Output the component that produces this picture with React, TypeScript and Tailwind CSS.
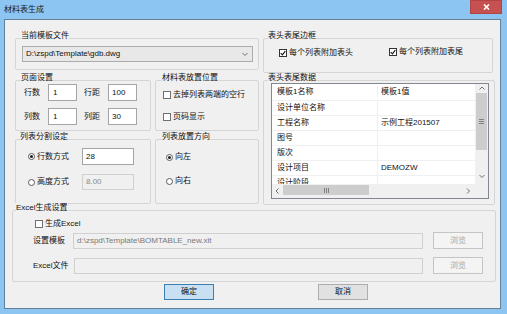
import clsx from "clsx";

const rows: [string, string][] = [
  ["设计单位名称", ""],
  ["工程名称", "示例工程201507"],
  ["图号", ""],
  ["版次", ""],
  ["设计项目", "DEMOZW"],
  ["设计阶段", ""],
];

function Group({
  label,
  labelPos,
  className,
  children,
}: {
  label: string;
  labelPos: string;
  className?: string;
  children?: React.ReactNode;
}) {
  return (
    <div className={clsx("relative rounded-[2px] border border-[#d5d5d5]", className)}>
      <span className={clsx("absolute -top-[8px] bg-[#f0f0f0] leading-[10px] whitespace-nowrap", labelPos)}>
        {label}
      </span>
      {children}
    </div>
  );
}

function Check({ label, checked }: { label: string; checked?: boolean }) {
  return (
    <div className="flex h-[10px] items-center whitespace-nowrap">
      <span
        className={clsx(
          "flex h-[8px] w-[8px] shrink-0 items-center justify-center border bg-white",
          checked ? "border-[#333333]" : "border-[#707070]"
        )}
      >
        {checked && (
          <svg width="6" height="6" viewBox="0 0 6 6">
            <path d="M0.7 3.1 L2.4 4.8 L5.3 1.1" fill="none" stroke="#1e1e1e" strokeWidth="1.2" />
          </svg>
        )}
      </span>
      <span className="ml-[2px] leading-[10px]">{label}</span>
    </div>
  );
}

function Radio({ label, on }: { label: string; on?: boolean }) {
  return (
    <div className="flex h-[10px] items-center whitespace-nowrap">
      <span className="flex h-[7px] w-[7px] shrink-0 items-center justify-center rounded-full border border-[#5a5a5a] bg-white">
        {on && <span className="h-[3px] w-[3px] rounded-full bg-[#1e1e1e]" />}
      </span>
      <span className="ml-[2px] leading-[10px]">{label}</span>
    </div>
  );
}

function Chevron({ dir }: { dir: "up" | "down" | "left" | "right" }) {
  const d = {
    up: "M0.5 3.5 L3 1 L5.5 3.5",
    down: "M0.5 1 L3 3.5 L5.5 1",
    left: "M3.5 0.5 L1 3 L3.5 5.5",
    right: "M1 0.5 L3.5 3 L1 5.5",
  }[dir];
  const horiz = dir === "left" || dir === "right";
  return (
    <svg width={horiz ? 5 : 6} height={horiz ? 6 : 5} viewBox={horiz ? "0 0 5 6" : "0 0 6 5"}>
      <path d={d} fill="none" stroke="#707070" strokeWidth="1" />
    </svg>
  );
}

export default function App() {
  return (
    <div className="flex h-[314px] w-[507px] flex-col overflow-hidden bg-[#8cc5f1] font-['Liberation_Sans','Noto_Sans_CJK_SC',sans-serif] text-[8px] leading-[10px] text-[#111]">
      {/* title bar */}
      <div className="flex h-[19px] shrink-0 items-start justify-between">
        <span className="ml-[4px] mt-[5px] leading-[10px] text-[#1a1a1a]">材料表生成</span>
        <div className="mr-[5px] flex h-[14px] w-[32px] items-center justify-center border border-[#b04545] bg-[#c75050]">
          <svg width="7" height="6" viewBox="0 0 7 6">
            <path d="M1 0.5 L6 5.5 M6 0.5 L1 5.5" stroke="white" strokeWidth="1.6" />
          </svg>
        </div>
      </div>

      {/* dialog body */}
      <div className="ml-[4px] h-[290px] w-[497px] shrink-0 border border-[#62809a] bg-[#f0f0f0]">
        <div className="ml-[10px] mt-[18px] flex">
          {/* left column */}
          <div className="flex w-[244px] flex-col">
            <Group label="当前模板文件" labelPos="left-[5px]" className="h-[32px] w-full">
              <div className="pl-[6px] pt-[7px]">
                <div className="flex h-[16px] w-[231px] items-center justify-between border border-[#acacac] bg-[#e8e8e8] pl-[3px] pr-[4px]">
                  <span>{"D:\\zspd\\Template\\gdb.dwg"}</span>
                  <Chevron dir="down" />
                </div>
              </div>
            </Group>

            <div className="mt-[10px] flex gap-[4px]">
              <Group label="页面设置" labelPos="left-[5px]" className="h-[51px] w-[136px]">
                <div className="flex flex-col pl-[8px] pt-[3px]">
                  <div className="flex h-[17px] items-center">
                    <span className="w-[24px]">行数</span>
                    <div className="flex h-[17px] w-[29px] items-center border border-[#a5a5a5] bg-white pl-[4px]">1</div>
                    <span className="ml-[7px] w-[24px]">行距</span>
                    <div className="flex h-[17px] w-[29px] items-center border border-[#a5a5a5] bg-white pl-[3px]">100</div>
                  </div>
                  <div className="mt-[7px] flex h-[17px] items-center">
                    <span className="w-[24px]">列数</span>
                    <div className="flex h-[17px] w-[29px] items-center border border-[#a5a5a5] bg-white pl-[4px]">1</div>
                    <span className="ml-[7px] w-[24px]">列距</span>
                    <div className="flex h-[17px] w-[29px] items-center border border-[#a5a5a5] bg-white pl-[3px]">30</div>
                  </div>
                </div>
              </Group>
              <Group label="材料表放置位置" labelPos="left-[6px]" className="h-[51px] w-[104px]">
                <div className="flex flex-col pl-[7px] pt-[9px]">
                  <Check label="去掉列表两端的空行" />
                  <div className="mt-[12px]">
                    <Check label="页码显示" />
                  </div>
                </div>
              </Group>
            </div>

            <div className="mt-[8px] flex gap-[4px]">
              <Group label="列表分割设定" labelPos="left-[4px]" className="h-[65px] w-[136px]">
                <div className="flex flex-col pl-[12px] pt-[8px]">
                  <div className="flex h-[17px] items-center">
                    <div className="w-[54px]">
                      <Radio label="行数方式" on />
                    </div>
                    <div className="flex h-[17px] w-[52px] items-center border border-[#a5a5a5] bg-white pl-[3px]">28</div>
                  </div>
                  <div className="mt-[9px] flex h-[16px] items-center">
                    <div className="w-[54px]">
                      <Radio label="高度方式" />
                    </div>
                    <div className="flex h-[16px] w-[52px] items-center border border-[#d0d0d0] bg-[#f0f0f0] pl-[3px] text-[#8a8a8a]">
                      8.00
                    </div>
                  </div>
                </div>
              </Group>
              <Group label="列表放置方向" labelPos="left-[6px]" className="h-[65px] w-[104px]">
                <div className="flex flex-col pl-[10px] pt-[12px]">
                  <Radio label="向左" on />
                  <div className="mt-[14px]">
                    <Radio label="向右" />
                  </div>
                </div>
              </Group>
            </div>
          </div>

          {/* right column */}
          <div className="ml-[4px] flex w-[232px] flex-col">
            <Group label="表头表尾边框" labelPos="left-[4px]" className="h-[35px] w-[230px]">
              <div className="flex pl-[15px] pt-[9px]">
                <div className="w-[110px]">
                  <Check label="每个列表附加表头" checked />
                </div>
                <div className="-mt-[1px]">
                  <Check label="每个列表附加表尾" checked />
                </div>
              </div>
            </Group>

            <Group label="表头表尾数据" labelPos="left-[4px]" className="mt-[7px] h-[125px] w-[232px]">
              <div className="pl-[7px] pt-[2px]">
                <div className="flex h-[116px] w-[218px] flex-col border border-[#828790] bg-white">
                  <div className="flex h-[100px]">
                    <div className="w-[203px] overflow-hidden">
                      <div className="flex h-[17px] items-center border-b border-[#f0f0f0]">
                        <span className="w-[106px] border-r border-[#f0f0f0] pl-[5px]">模板1名称</span>
                        <span className="pl-[3px]">模板1值</span>
                      </div>
                      {rows.map(([k, v]) => (
                        <div key={k} className="flex h-[15px] items-center border-b border-[#f0f0f0]">
                          <span className="flex h-[15px] w-[106px] items-center border-r border-[#f0f0f0] pl-[5px]">{k}</span>
                          <span className="pl-[3px]">{v}</span>
                        </div>
                      ))}
                    </div>
                    <div className="flex w-[13px] flex-col bg-[#f0f0f0]">
                      <div className="flex h-[9px] items-center justify-center">
                        <Chevron dir="up" />
                      </div>
                      <div className="mx-auto flex h-[57px] w-[11px] items-center justify-center bg-[#cdcdcd]">
                        <svg width="5" height="5" viewBox="0 0 5 5">
                          <path d="M0 0.5 H5 M0 2.5 H5 M0 4.5 H5" stroke="#808080" strokeWidth="1" />
                        </svg>
                      </div>
                      <div className="flex-1" />
                      <div className="flex h-[16px] items-center justify-center">
                        <Chevron dir="down" />
                      </div>
                    </div>
                  </div>
                  <div className="flex h-[14px]">
                    <div className="flex w-[203px] items-start bg-[#f0f0f0]">
                      <div className="flex h-[14px] w-[11px] items-center justify-center">
                        <Chevron dir="left" />
                      </div>
                      <div className="mt-[1px] flex h-[10px] w-[86px] items-center justify-center bg-[#cdcdcd]">
                        <svg width="5" height="5" viewBox="0 0 5 5">
                          <path d="M0.5 0 V5 M2.5 0 V5 M4.5 0 V5" stroke="#808080" strokeWidth="1" />
                        </svg>
                      </div>
                      <div className="flex-1" />
                      <div className="flex h-[14px] w-[13px] items-center justify-center">
                        <Chevron dir="right" />
                      </div>
                    </div>
                    <div className="w-[13px] bg-[#f0f0f0]" />
                  </div>
                </div>
              </div>
            </Group>
          </div>
        </div>

        {/* excel settings */}
        <Group label="Excel生成设置" labelPos="left-[3px]" className="ml-[7px] mt-[5px] h-[72px] w-[484px]">
          <div className="flex flex-col pl-[22px] pt-[8px]">
            <Check label="生成Excel" />
            <div className="-ml-[2px] mt-[3px] flex h-[17px] items-center">
              <span className="w-[40px]">设置模板</span>
              <div className="flex h-[16px] w-[350px] items-center border border-[#d0d0d0] bg-[#f0f0f0] pl-[3px] text-[#7a7a7a]">
                {"d:\\zspd\\Template\\BOMTABLE_new.xlt"}
              </div>
              <div className="ml-[10px] flex h-[17px] w-[50px] items-center justify-center border border-[#c4c4c4] bg-[#f4f4f4] text-[#a8a8a8]">
                浏览
              </div>
            </div>
            <div className="-ml-[2px] mt-[8px] flex h-[17px] items-center">
              <span className="w-[41px]">Excel文件</span>
              <div className="h-[16px] w-[349px] border border-[#d0d0d0] bg-[#f0f0f0]" />
              <div className="ml-[10px] flex h-[17px] w-[50px] items-center justify-center border border-[#c4c4c4] bg-[#f4f4f4] text-[#a8a8a8]">
                浏览
              </div>
            </div>
          </div>
        </Group>

        {/* buttons */}
        <div className="ml-[159px] mt-[2px] flex gap-[104px]">
          <div className="flex h-[16px] w-[50px] items-center justify-center border border-[#3c7fb1] bg-[#c9e0f3]">确定</div>
          <div className="flex h-[16px] w-[50px] items-center justify-center border border-[#adadad] bg-[#e1e1e1]">取消</div>
        </div>
      </div>
    </div>
  );
}
